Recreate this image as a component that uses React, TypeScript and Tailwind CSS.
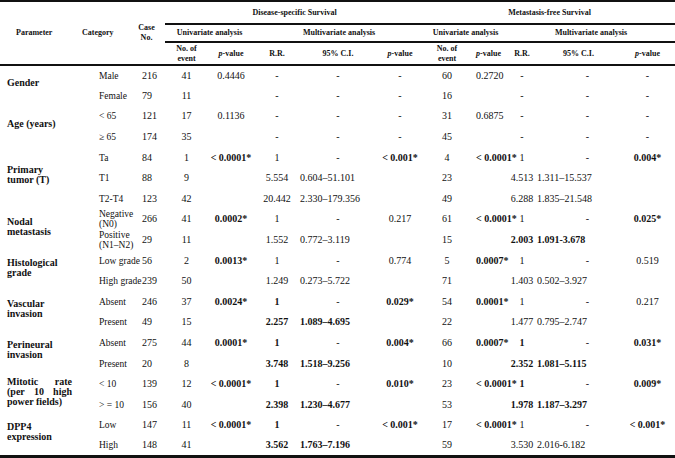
type Cell = { t: string; b?: boolean };

const c = (t: string, b = false): Cell => ({ t, b });

type Row = {
  cat: React.ReactNode;
  n: string;
  cells: Cell[];
};

type Group = { label: React.ReactNode; rows: Row[] };

const groups: Group[] = [
  {
    label: "Gender",
    rows: [
      { cat: "Male", n: "216", cells: [c("41"), c("0.4446"), c("-"), c("-"), c("-"), c("60"), c("0.2720"), c("-"), c("-"), c("-")] },
      { cat: "Female", n: "79", cells: [c("11"), c(""), c("-"), c("-"), c("-"), c("16"), c(""), c("-"), c("-"), c("-")] },
    ],
  },
  {
    label: "Age (years)",
    rows: [
      { cat: "< 65", n: "121", cells: [c("17"), c("0.1136"), c("-"), c("-"), c("-"), c("31"), c("0.6875"), c("-"), c("-"), c("-")] },
      { cat: "≥ 65", n: "174", cells: [c("35"), c(""), c("-"), c("-"), c("-"), c("45"), c(""), c("-"), c("-"), c("-")] },
    ],
  },
  {
    label: (
      <>
        Primary
        <br />
        tumor (T)
      </>
    ),
    rows: [
      { cat: "Ta", n: "84", cells: [c("1"), c("< 0.0001*", true), c("1"), c("-"), c("< 0.001*", true), c("4"), c("< 0.0001*", true), c("1"), c("-"), c("0.004*", true)] },
      { cat: "T1", n: "88", cells: [c("9"), c(""), c("5.554"), c("0.604–51.101"), c(""), c("23"), c(""), c("4.513"), c("1.311–15.537"), c("")] },
      { cat: "T2-T4", n: "123", cells: [c("42"), c(""), c("20.442"), c("2.330–179.356"), c(""), c("49"), c(""), c("6.288"), c("1.835–21.548"), c("")] },
    ],
  },
  {
    label: (
      <>
        Nodal
        <br />
        metastasis
      </>
    ),
    rows: [
      {
        cat: (
          <>
            Negative
            <br />
            (N0)
          </>
        ),
        n: "266",
        cells: [c("41"), c("0.0002*", true), c("1"), c("-"), c("0.217"), c("61"), c("< 0.0001*", true), c("1"), c("-"), c("0.025*", true)],
      },
      {
        cat: (
          <>
            Positive
            <br />
            (N1–N2)
          </>
        ),
        n: "29",
        cells: [c("11"), c(""), c("1.552"), c("0.772–3.119"), c(""), c("15"), c(""), c("2.003", true), c("1.091-3.678", true), c("")],
      },
    ],
  },
  {
    label: (
      <>
        Histological
        <br />
        grade
      </>
    ),
    rows: [
      { cat: "Low grade", n: "56", cells: [c("2"), c("0.0013*", true), c("1"), c("-"), c("0.774"), c("5"), c("0.0007*", true), c("1"), c("-"), c("0.519")] },
      { cat: "High grade", n: "239", cells: [c("50"), c(""), c("1.249"), c("0.273–5.722"), c(""), c("71"), c(""), c("1.403"), c("0.502–3.927"), c("")] },
    ],
  },
  {
    label: (
      <>
        Vascular
        <br />
        invasion
      </>
    ),
    rows: [
      { cat: "Absent", n: "246", cells: [c("37"), c("0.0024*", true), c("1", true), c("-"), c("0.029*", true), c("54"), c("0.0001*", true), c("1"), c("-"), c("0.217")] },
      { cat: "Present", n: "49", cells: [c("15"), c(""), c("2.257", true), c("1.089–4.695", true), c(""), c("22"), c(""), c("1.477"), c("0.795–2.747"), c("")] },
    ],
  },
  {
    label: (
      <>
        Perineural
        <br />
        invasion
      </>
    ),
    rows: [
      { cat: "Absent", n: "275", cells: [c("44"), c("0.0001*", true), c("1", true), c("-"), c("0.004*", true), c("66"), c("0.0007*", true), c("1", true), c("-"), c("0.031*", true)] },
      { cat: "Present", n: "20", cells: [c("8"), c(""), c("3.748", true), c("1.518–9.256", true), c(""), c("10"), c(""), c("2.352", true), c("1.081–5.115", true), c("")] },
    ],
  },
  {
    label: (
      <div className="w-[65px]">
        <div className="flex justify-between">
          <span>Mitotic</span>
          <span>rate</span>
        </div>
        <div className="flex justify-between">
          <span>(per</span>
          <span>10</span>
          <span>high</span>
        </div>
        <div>power fields)</div>
      </div>
    ),
    rows: [
      { cat: "< 10", n: "139", cells: [c("12"), c("< 0.0001*", true), c("1", true), c("-"), c("0.010*", true), c("23"), c("< 0.0001*", true), c("1", true), c("-"), c("0.009*", true)] },
      { cat: "> = 10", n: "156", cells: [c("40"), c(""), c("2.398", true), c("1.230–4.677", true), c(""), c("53"), c(""), c("1.978", true), c("1.187–3.297", true), c("")] },
    ],
  },
  {
    label: (
      <>
        DPP4
        <br />
        expression
      </>
    ),
    rows: [
      { cat: "Low", n: "147", cells: [c("11"), c("< 0.0001*", true), c("1", true), c("-"), c("< 0.001*", true), c("17"), c("< 0.0001*", true), c("1"), c("-"), c("< 0.001*", true)] },
      { cat: "High", n: "148", cells: [c("41"), c(""), c("3.562", true), c("1.763–7.196", true), c(""), c("59"), c(""), c("3.530"), c("2.016-6.182"), c("")] },
    ],
  },
];

// alignment of the ten columns after Case No.
const colCls = [
  "text-center", // no. of event
  "text-center", // p-value
  "text-center", // R.R.
  "text-left", // 95% CI
  "text-center", // p-value
  "text-center", // no. of event
  "text-left pl-[6px]", // p-value
  "text-center", // R.R.
  "text-left", // 95% CI
  "text-center", // p-value
];

const widths = [80, 48, 37, 43, 46, 46, 76, 48, 46, 37, 30, 83, 55];

export default function App() {
  const hd = "font-bold text-[8px] leading-[10px] align-middle border-b-2 border-[#111]";
  return (
    <div
      className="w-[675px] h-[458px] bg-white text-[#111] overflow-hidden"
      style={{ fontFamily: '"Liberation Serif", "Times New Roman", serif' }}
    >
      <table className="table-fixed border-collapse w-[675px] border-t-2 border-[#111]">
        <colgroup>
          {widths.map((w, i) => (
            <col key={i} style={{ width: w }} />
          ))}
        </colgroup>
        <thead>
          <tr className="h-[23px]">
            <th rowSpan={3} className={`${hd} text-left pl-[16px]`}>
              Parameter
            </th>
            <th rowSpan={3} className={`${hd} text-left pl-[2px]`}>
              Category
            </th>
            <th rowSpan={3} className={`${hd} text-center`}>
              Case
              <br />
              No.
            </th>
            <th colSpan={5} className={`${hd} text-center`}>
              Disease-specific Survival
            </th>
            <th colSpan={5} className={`${hd} text-center`}>
              Metastasis-free Survival
            </th>
          </tr>
          <tr className="h-[18px]">
            <th colSpan={2} className={`${hd} text-center`}>
              Univariate analysis
            </th>
            <th colSpan={3} className={`${hd} text-center`}>
              Multivariate analysis
            </th>
            <th colSpan={2} className={`${hd} text-center`}>
              Univariate analysis
            </th>
            <th colSpan={3} className={`${hd} text-center`}>
              Multivariate analysis
            </th>
          </tr>
          <tr className="h-[23px]">
            <th className={`${hd} text-center`}>
              No. of
              <br />
              event
            </th>
            <th className={`${hd} text-center`}>
              <i>p</i>-value
            </th>
            <th className={`${hd} text-center`}>R.R.</th>
            <th className={`${hd} text-center`}>95% C.I.</th>
            <th className={`${hd} text-center`}>
              <i>p</i>-value
            </th>
            <th className={`${hd} text-center`}>
              No. of
              <br />
              event
            </th>
            <th className={`${hd} text-center`}>
              <i>p</i>-value
            </th>
            <th className={`${hd} text-center`}>R.R.</th>
            <th className={`${hd} text-center`}>95% C.I.</th>
            <th className={`${hd} text-center`}>
              <i>p</i>-value
            </th>
          </tr>
        </thead>
        <tbody className="text-[10px] leading-[10px]">
          {groups.map((g, gi) =>
            g.rows.map((r, ri) => {
              const last = gi === groups.length - 1 && ri === g.rows.length - 1;
              const bb = last ? "border-b-[3px] border-[#111]" : "";
              return (
                <tr key={`${gi}-${ri}`} className="h-[20.6px]">
                  {ri === 0 && (
                    <td
                      rowSpan={g.rows.length}
                      className={`align-middle pl-[7px] pb-[6px] font-bold ${gi === groups.length - 1 ? "border-b-[3px] border-[#111]" : ""}`}
                    >
                      {g.label}
                    </td>
                  )}
                  <td className={`pl-[19px] whitespace-nowrap align-middle text-[9.5px] ${bb}`}>{r.cat}</td>
                  <td className={`pl-[14px] whitespace-nowrap align-middle ${bb}`}>{r.n}</td>
                  {r.cells.map((x, ci) => (
                    <td
                      key={ci}
                      className={`whitespace-nowrap align-middle ${x.t === "-" ? "text-center" : colCls[ci]} ${
                        ci === 8 && x.t === "-" ? "pl-[18px]" : ""
                      } ${x.b ? "font-bold" : ""} ${bb}`}
                    >
                      {x.t}
                    </td>
                  ))}
                </tr>
              );
            })
          )}
        </tbody>
      </table>
    </div>
  );
}
